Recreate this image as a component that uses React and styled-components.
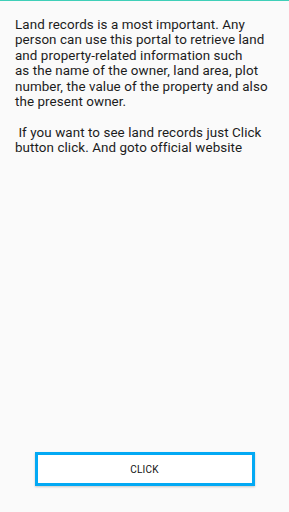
import React from "react";
import styled, { createGlobalStyle } from "styled-components";

const Global = createGlobalStyle`
  html, body { margin: 0; padding: 0; background: #fafafa; }
  #root { height: 512px; }
`;

const Screen = styled.div`
  width: 289px;
  height: 512px;
  background: #fafafa;
  display: flex;
  flex-direction: column;
  border-top: 1px solid #3fcfb8;
  box-sizing: border-box;
  overflow: hidden;
  font-family: Roboto, "Liberation Sans", sans-serif;
`;

const Body = styled.div`
  flex: 1;
  padding: 16px 0 0 15px;
  font-size: 13.4px;
  letter-spacing: 0.08px;
  line-height: 15.4px;
  color: #1c1c1c;
  white-space: pre;
`;

const Footer = styled.div`
  display: flex;
  justify-content: center;
  padding-bottom: 26px;
`;

const Button = styled.button`
  width: 220px;
  height: 34px;
  box-sizing: border-box;
  border: 3px solid #03a9f4;
  background: #fff;
  font-family: Roboto, "Liberation Sans", sans-serif;
  font-size: 10px;
  font-weight: 400;
  color: #111;
  letter-spacing: 0.2px;
  box-shadow: 0 1px 2px rgba(0,0,0,0.2);
  padding: 0;
`;

const text = `Land records is a most important. Any
person can use this portal to retrieve land
and property-related information such
as the name of the owner, land area, plot
number, the value of the property and also
the present owner.

 If you want to see land records just Click
button click. And goto official website`;

export default function App() {
  return (
    <>
      <Global />
      <Screen>
        <Body>{text}</Body>
        <Footer>
          <Button>CLICK</Button>
        </Footer>
      </Screen>
    </>
  );
}
